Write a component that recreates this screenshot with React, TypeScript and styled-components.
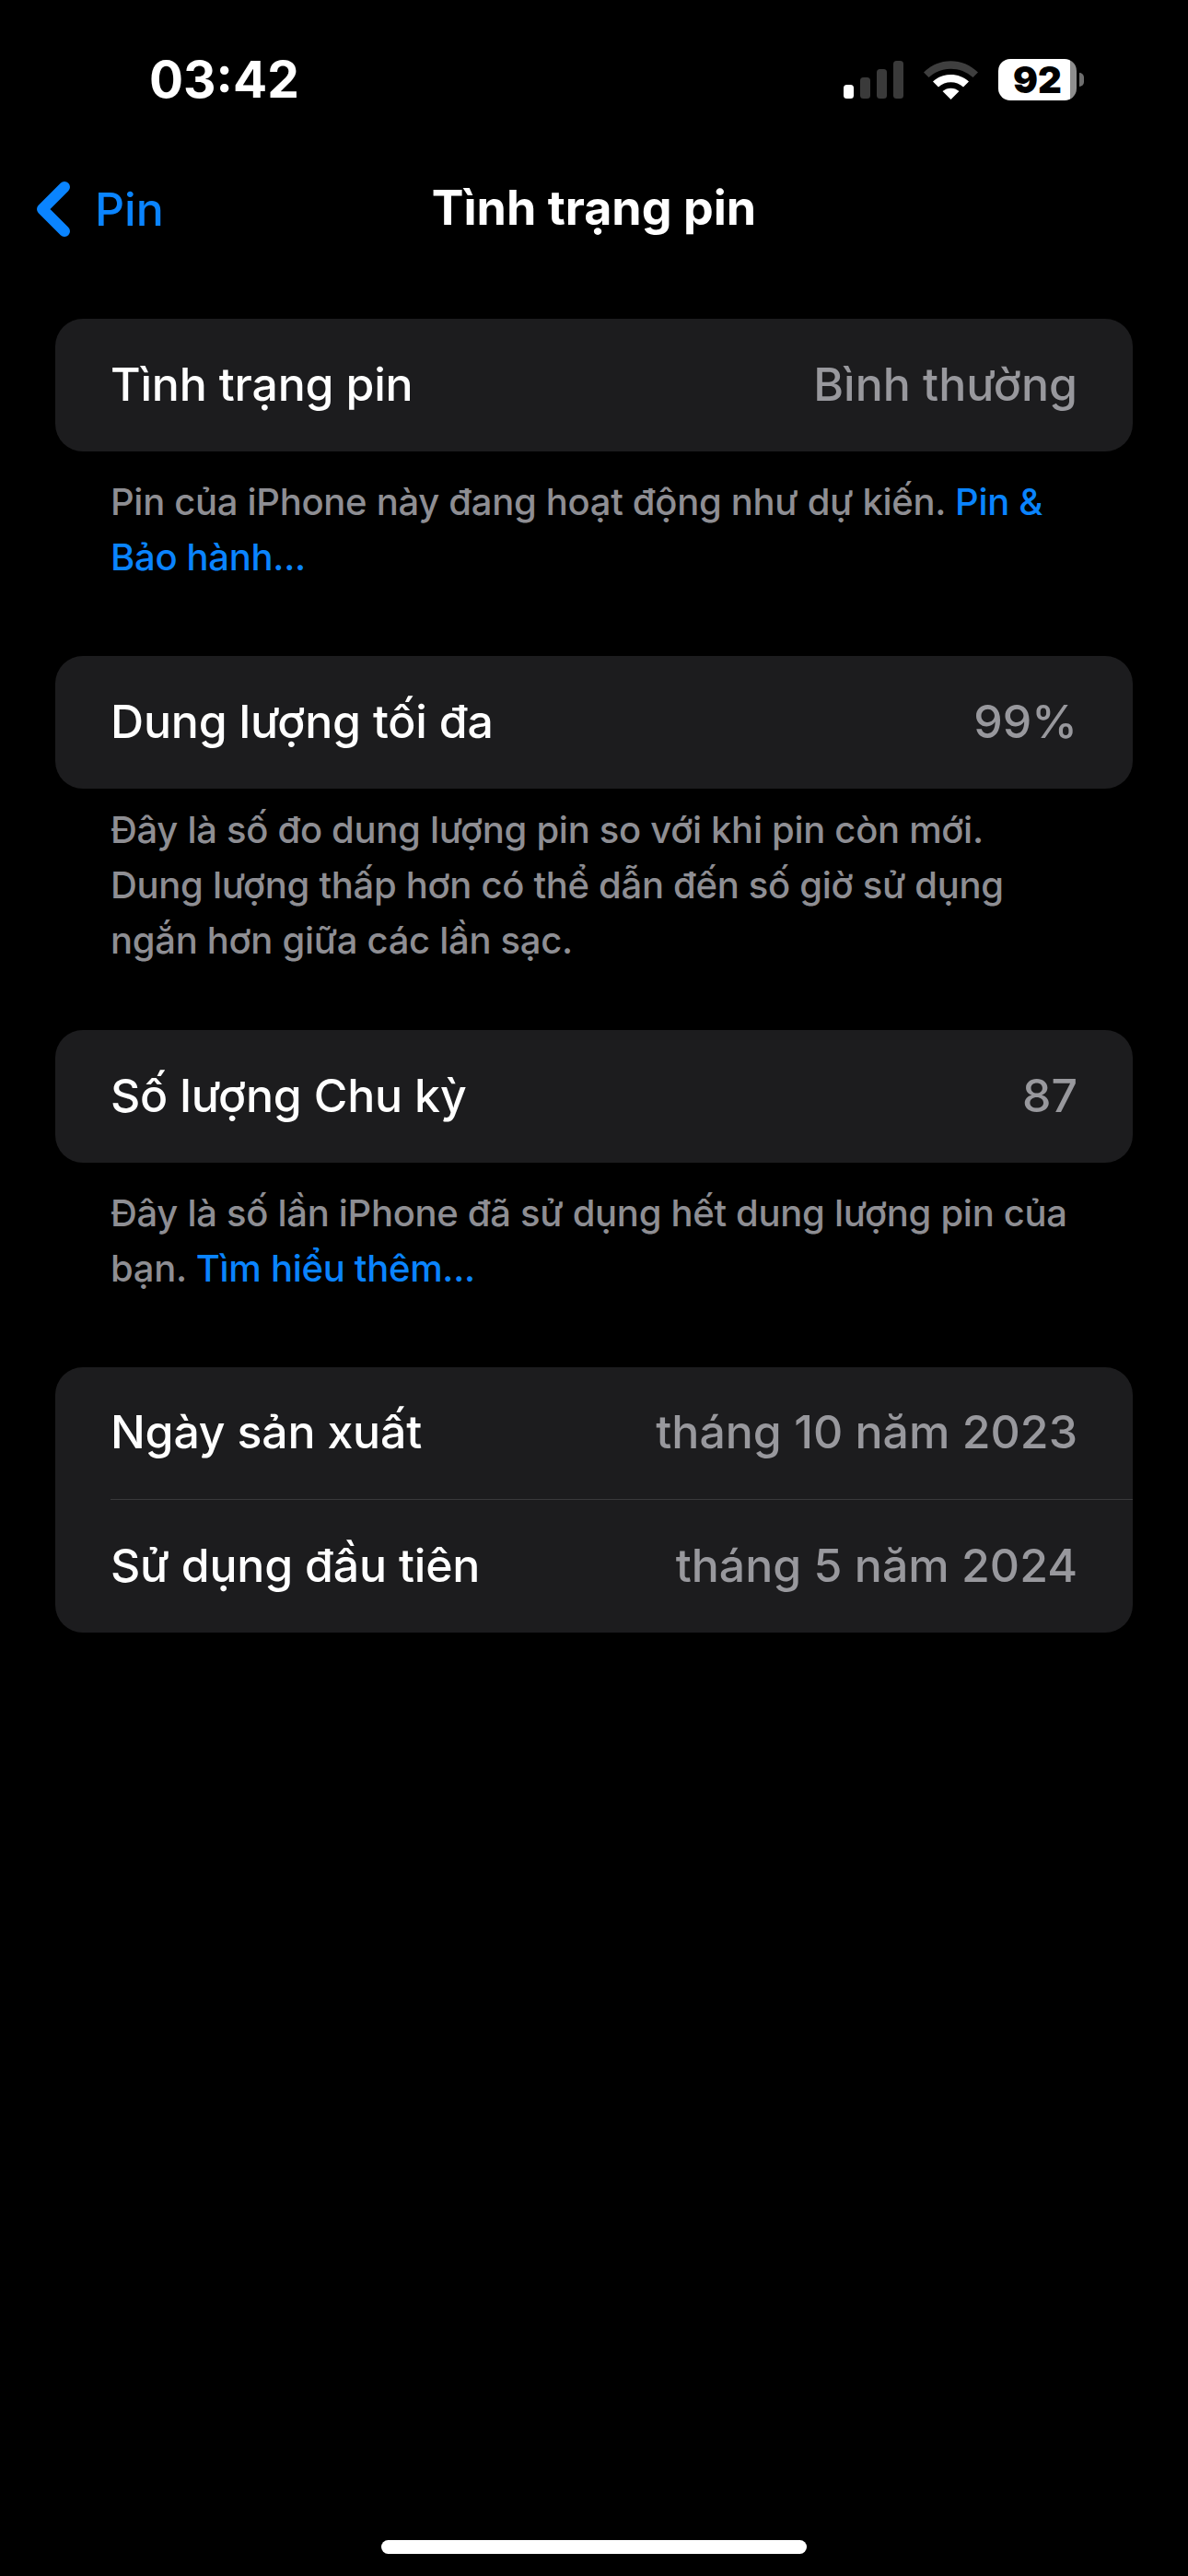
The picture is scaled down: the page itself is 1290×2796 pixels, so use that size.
import React from 'react';
import styled, { createGlobalStyle } from 'styled-components';

const GlobalStyle = createGlobalStyle`
    html, body {
        margin: 0;
        padding: 0;
        background: #000;
    }
    * {
        box-sizing: border-box;
    }
`;

const Screen = styled.div`
    width: 1290px;
    height: 2796px;
    background: #000;
    color: #fff;
    font-family: Inter, "Noto Sans", sans-serif;
    display: flex;
    flex-direction: column;
`;

const StatusBar = styled.div`
    height: 126px;
    padding: 53px 121px 0 162px;
    display: flex;
    justify-content: space-between;
    align-items: flex-start;
`;

const Clock = styled.div`
    font-size: 55px;
    line-height: 67px;
    font-weight: 700;
`;

const StatusIcons = styled.div`
    display: flex;
    align-items: center;
    height: 67px;
`;

const BatteryBody = styled.div`
    position: relative;
    width: 85px;
    height: 45px;
    margin-left: 22px;
    border-radius: 13px;
    background: linear-gradient(to right, #fff 0, #fff 78px, #8e8e8e 78px);
    color: #000;
    font-size: 40px;
    line-height: 45px;
    font-weight: 900;
    text-align: center;
    &::after {
        content: "";
        position: absolute;
        left: 88px;
        top: 15px;
        width: 5px;
        height: 15px;
        border-radius: 0 5px 5px 0;
        background: #6e6e6e;
    }
`;

const NavBar = styled.div`
    height: 220px;
    padding: 0 40px 18px;
    display: flex;
    align-items: center;
    position: relative;
`;

const BackLink = styled.div`
    display: flex;
    align-items: center;
    gap: 27px;
    color: #0a84ff;
    font-size: 50px;
    font-weight: 500;
`;

const NavTitle = styled.div`
    position: absolute;
    left: 0;
    right: 0;
    top: 0;
    line-height: 200px;
    text-align: center;
    font-size: 52px;
    font-weight: 700;
`;

const Section = styled.div`
    padding: 0 60px;
`;

const Card = styled.div`
    background: #1c1c1e;
    border-radius: 30px;
    overflow: hidden;
`;

const Row = styled.div<{ $divider?: boolean }>`
    height: 144px;
    margin-left: 60px;
    padding: 0 60px 3px 0;
    display: flex;
    align-items: center;
    justify-content: space-between;
    font-size: 50px;
    font-weight: 500;
    border-bottom: ${props => (props.$divider ? '1px solid #3a3a3c' : 'none')};
`;

const RowLabel = styled.div`
    color: #fff;
    letter-spacing: -0.2px;
`;

const RowValue = styled.div`
    color: #98989d;
`;

const Footnote = styled.div<{ $top: number; $bottom: number }>`
    margin: ${props => props.$top}px 68px ${props => props.$bottom}px 60px;
    font-size: 40px;
    line-height: 60px;
    font-weight: 500;
    letter-spacing: -0.3px;
    color: #8e8e93;
`;

const LinkText = styled.span`
    color: #0a84ff;
`;

const HomeBar = styled.div`
    width: 462px;
    height: 15px;
    margin: auto auto 24px;
    border-radius: 8px;
    background: #fff;
`;

const SignalIcon = () => (
    <svg width="65" height="41" viewBox="0 0 65 41">
        <rect x="0" y="26" width="11" height="15" rx="3.5" fill="#fff" />
        <rect x="18" y="18" width="11" height="23" rx="3.5" fill="#3a3a3a" />
        <rect x="36" y="9" width="11" height="32" rx="3.5" fill="#3a3a3a" />
        <rect x="54" y="0" width="11" height="41" rx="3.5" fill="#3a3a3a" />
    </svg>
);

const WifiIcon = () => (
    <svg width="59" height="42" viewBox="0 0 59 42" style={{ marginLeft: 22 }}>
        <path d="M0 12.5C16.5 -4 42.5 -4 59 12.5L53.5 18C40 5.5 19 5.5 5.5 18Z" fill="#3f3f3f" />
        <path d="M10 22.5C20.5 12.5 38.5 12.5 49 22.5L43 28.5C35.5 21.5 23.5 21.5 16 28.5Z" fill="#fff" />
        <path d="M20.5 33C25.5 28.5 33.5 28.5 38.5 33L29.5 42Z" fill="#fff" />
    </svg>
);

const BackChevron = () => (
    <svg width="36" height="60" viewBox="0 0 36 60">
        <path d="M30 6L6 30L30 54" fill="none" stroke="#0a84ff" strokeWidth="12" strokeLinecap="round" strokeLinejoin="round" />
    </svg>
);

const App: React.FC = () => {
    return (
        <Screen>
            <GlobalStyle />
            <StatusBar>
                <Clock>03:42</Clock>
                <StatusIcons>
                    <SignalIcon />
                    <WifiIcon />
                    <BatteryBody>92</BatteryBody>
                </StatusIcons>
            </StatusBar>
            <NavBar>
                <NavTitle>Tình trạng pin</NavTitle>
                <BackLink>
                    <BackChevron />
                    Pin
                </BackLink>
            </NavBar>
            <Section>
                <Card>
                    <Row>
                        <RowLabel>Tình trạng pin</RowLabel>
                        <RowValue>Bình thường</RowValue>
                    </Row>
                </Card>
                <Footnote $top={25} $bottom={77}>
                    Pin của iPhone này đang hoạt động như dự kiến. <LinkText>Pin &amp; Bảo hành...</LinkText>
                </Footnote>
                <Card>
                    <Row>
                        <RowLabel>Dung lượng tối đa</RowLabel>
                        <RowValue>99%</RowValue>
                    </Row>
                </Card>
                <Footnote $top={15} $bottom={67}>
                    Đây là số đo dung lượng pin so với khi pin còn mới. Dung lượng thấp hơn có thể dẫn đến số giờ sử dụng ngắn hơn giữa các lần sạc.
                </Footnote>
                <Card>
                    <Row>
                        <RowLabel>Số lượng Chu kỳ</RowLabel>
                        <RowValue>87</RowValue>
                    </Row>
                </Card>
                <Footnote $top={25} $bottom={77}>
                    Đây là số lần iPhone đã sử dụng hết dung lượng pin của bạn. <LinkText>Tìm hiểu thêm...</LinkText>
                </Footnote>
                <Card>
                    <Row $divider>
                        <RowLabel>Ngày sản xuất</RowLabel>
                        <RowValue>tháng 10 năm 2023</RowValue>
                    </Row>
                    <Row>
                        <RowLabel>Sử dụng đầu tiên</RowLabel>
                        <RowValue>tháng 5 năm 2024</RowValue>
                    </Row>
                </Card>
            </Section>
            <HomeBar />
        </Screen>
    );
};

export default App;
